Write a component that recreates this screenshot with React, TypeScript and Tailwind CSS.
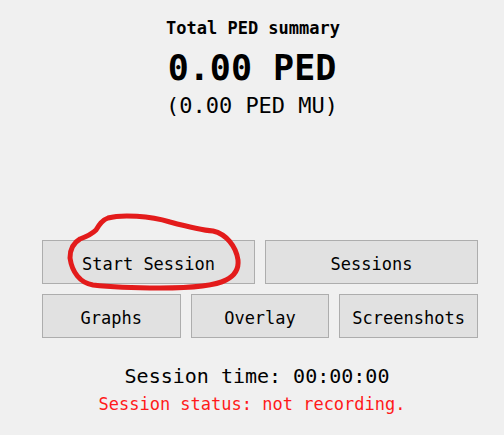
const mono = { fontFamily: '"DejaVu Sans Mono", "Liberation Mono", monospace' };

function Btn({ label }: { label: string }) {
  return (
    <button className="h-[44px] border border-[#adadad] bg-[#e1e1e1] pt-[3px] text-[17px] leading-5 text-black">
      {label}
    </button>
  );
}

export default function App() {
  return (
    <div className="relative h-[435px] w-[504px] overflow-hidden bg-[#f0f0f0]" style={mono}>
      <div className="flex flex-col items-center pt-[18px]">
        <h1 className="ml-[2px] text-[17px] font-bold leading-5 text-black">Total PED summary</h1>
        <div className="mt-[10px] text-[35px] font-bold leading-10 text-black">0.00 PED</div>
        <div className="mt-[5px] text-[22px] leading-[26px] text-black">(0.00 PED MU)</div>

        <div className="ml-[16px] mt-[121px] flex w-[436px] flex-col gap-[10px]">
          <div className="grid grid-cols-2 gap-[10px]">
            <Btn label="Start Session" />
            <Btn label="Sessions" />
          </div>
          <div className="grid grid-cols-3 gap-[10px]">
            <Btn label="Graphs" />
            <Btn label="Overlay" />
            <Btn label="Screenshots" />
          </div>
        </div>

        <div className="ml-[10px] mt-[26px] text-[20px] leading-6 text-black">Session time: 00:00:00</div>
        <div className="mt-[6px] text-[17px] leading-5 text-[#ff1a1a]">Session status: not recording.</div>
      </div>

      {/* hand-drawn highlight around Start Session */}
      <svg
        className="pointer-events-none absolute left-0 top-0"
        width="504"
        height="435"
        viewBox="0 0 504 435"
      >
        <path
          d="M108 218 C122 214 150 216 170 222 C185 226 200 230 213 231 C226 234 236 246 238 260 C239 270 234 276 226 280 C215 286 190 288 160 288 C135 288 110 287 93 285 C80 283 72 272 70 258 C70 249 73 243 80 239 C88 236 92 234 96 230 C99 225 102 220 108 218 Z"
          fill="none"
          stroke="#e31b1b"
          strokeWidth="5"
          strokeLinejoin="round"
        />
      </svg>
    </div>
  );
}
